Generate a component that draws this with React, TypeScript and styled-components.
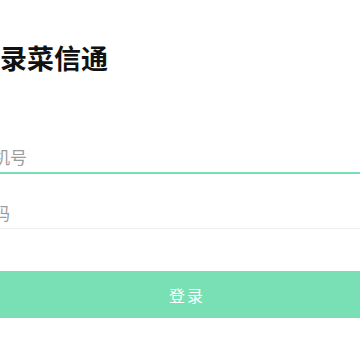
import React, { useState } from 'react'
import styled, { createGlobalStyle } from 'styled-components'

const GlobalStyle = createGlobalStyle`
  html, body {
    margin: 0;
    padding: 0;
    background: #fff;
    overflow: hidden;
  }
  body {
    font-family: "Noto Sans CJK SC", "Noto Sans", sans-serif;
  }
`

export default function App() {
  const [phone, setPhone] = useState('')
  const [password, setPassword] = useState('')

  const submit = (e: React.FormEvent<HTMLFormElement>) => {
    e.preventDefault()
  }

  return (
    <Page>
      <GlobalStyle />
      <Title>登录菜信通</Title>
      <Form onSubmit={(e) => submit(e)}>
        <Field $active>
          <Input
            value={phone}
            onChange={(e) => setPhone(e.target.value)}
            placeholder='手机号'
          />
        </Field>
        <Field $gapTop={27}>
          <Input
            type='password'
            value={password}
            onChange={(e) => setPassword(e.target.value)}
            placeholder='密码'
          />
        </Field>
        <SubmitButton type='submit'>登录</SubmitButton>
      </Form>
    </Page>
  )
}

const Page = styled.div`
  display: flex;
  flex-direction: column;
  margin-left: -24px;
  width: 420px;
  padding-top: 40px;
`

const Title = styled.h1`
  margin: 0 0 0 -3px;
  font-size: 27px;
  line-height: 36px;
  font-weight: 700;
  color: #111;
`

const Form = styled.form`
  display: flex;
  flex-direction: column;
  margin-top: 69px;
`

const Field = styled.div<{ $active?: boolean; $gapTop?: number }>`
  display: flex;
  margin-top: ${(p) => p.$gapTop ?? 0}px;
  padding-bottom: 3px;
  border-bottom: ${(p) => (p.$active ? '2px solid #78deb4' : '1px solid #eeeeee')};
`

const Input = styled.input`
  width: 100%;
  height: 24px;
  padding: 0;
  border: 0;
  outline: 0;
  background: transparent;
  font-family: "Noto Sans CJK SC", "Noto Sans", sans-serif;
  font-size: 17px;
  line-height: 24px;
  color: #333;
  &::placeholder {
    color: #9c9c9c;
  }
`

const SubmitButton = styled.button`
  margin-top: 42px;
  height: 47px;
  width: 100%;
  border: 0;
  border-radius: 0;
  background-color: #79dfb4;
  color: #ffffff;
  font-family: "Noto Sans CJK SC", "Noto Sans", sans-serif;
  font-size: 16px;
  letter-spacing: 2px;
  text-indent: 2px;
  cursor: pointer;
`
